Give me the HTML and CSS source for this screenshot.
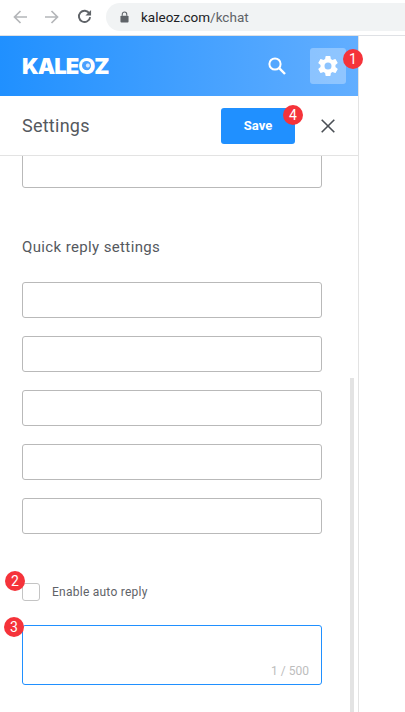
FILE: index.html
```html
<!DOCTYPE html>
<html lang="en">
<head>
    <meta charset="UTF-8">
    <meta name="viewport" content="width=device-width, initial-scale=1.0">
    <title>Kaleoz kchat settings</title>
    <link rel="stylesheet" href="styles.css">
</head>
<body>
    <div class="browser-bar">
        <svg class="nav-icon" width="14" height="14" viewBox="0 0 14 14"><path d="M14 7H1.5M7.5 1L1.5 7l6 6" fill="none" stroke="#b4b6b9" stroke-width="1.7"/></svg>
        <svg class="nav-icon" width="14" height="14" viewBox="0 0 14 14"><path d="M0 7h12.5M6.5 1l6 6-6 6" fill="none" stroke="#b4b6b9" stroke-width="1.7"/></svg>
        <svg class="nav-icon" width="15" height="15" viewBox="0 0 16 16"><path d="M13.2 4.8A6 6 0 1 0 14 8.6" fill="none" stroke="#5f6368" stroke-width="2"/><path d="M15 1v6H9z" fill="#5f6368"/></svg>
        <div class="url-box">
            <svg width="9" height="12" viewBox="0 0 10 13"><path d="M2.5 5V3.5a2.5 2.5 0 0 1 5 0V5" fill="none" stroke="#5f6368" stroke-width="1.2"/><rect x="0.5" y="5" width="9" height="7.5" rx="1" fill="#5f6368"/></svg>
            <span class="url-text">kaleoz.com<span class="url-path">/kchat</span></span>
        </div>
    </div>

    <div class="panel">
        <header class="top-bar">
            <div class="logo">KALE<span class="logo-o">O</span>Z</div>
            <div class="top-actions">
                <svg width="20" height="20" viewBox="0 0 20 20"><circle cx="8" cy="8" r="5.6" fill="none" stroke="#fff" stroke-width="2"/><path d="M12.2 12.2L18 18" stroke="#fff" stroke-width="2.4"/></svg>
                <div class="gear-box">
                    <svg width="24" height="24" viewBox="0 0 24 24"><path fill="#fff" d="M19.4 13c.04-.32.1-.66.1-1s-.06-.68-.1-1l2.1-1.65c.2-.15.25-.42.13-.64l-2-3.46c-.12-.22-.4-.3-.6-.22l-2.5 1c-.52-.4-1.08-.73-1.7-.98l-.37-2.65A.5.5 0 0 0 14 2h-4a.5.5 0 0 0-.5.42l-.37 2.65c-.62.25-1.18.6-1.7.98l-2.5-1c-.23-.09-.48 0-.6.22l-2 3.46c-.13.22-.07.49.12.64L4.57 11c-.04.32-.07.66-.07 1s.03.68.07 1l-2.11 1.65c-.19.15-.25.42-.12.64l2 3.46c.12.22.37.3.6.22l2.5-1c.52.4 1.08.73 1.7.98l.37 2.65c.04.24.25.42.5.42h4c.25 0 .46-.18.5-.42l.37-2.65c.62-.25 1.18-.58 1.7-.98l2.5 1c.23.09.48 0 .6-.22l2-3.46c.12-.22.07-.49-.13-.64L19.4 13zM12 15.5a3.5 3.5 0 1 1 0-7 3.5 3.5 0 0 1 0 7z"/></svg>
                    <span class="badge badge-gear">1</span>
                </div>
            </div>
        </header>

        <div class="sub-bar">
            <h1 class="sub-title">Settings</h1>
            <div class="sub-actions">
                <button class="save-btn">Save<span class="badge badge-save">4</span></button>
                <svg width="14" height="14" viewBox="0 0 14 14"><path d="M0.7 0.7l12.6 12.6M13.3 0.7L0.7 13.3" stroke="#4a4f55" stroke-width="1.6"/></svg>
            </div>
        </div>

        <div class="scroll-area">
            <div class="scroll-thumb"></div>
            <div class="text-input input-cut"></div>
            <h2 class="section-title">Quick reply settings</h2>
            <div class="input-list">
                <div class="text-input"></div>
                <div class="text-input"></div>
                <div class="text-input"></div>
                <div class="text-input"></div>
                <div class="text-input"></div>
            </div>
            <label class="check-row">
                <span class="check-box"><span class="badge badge-check">2</span></span>
                <span class="check-label">Enable auto reply</span>
            </label>
            <div class="reply-box">
                <span class="badge badge-reply">3</span>
                <span class="counter">1 / 500</span>
            </div>
        </div>
    </div>
</body>
</html>
```

FILE: styles.css
```css
* {
    box-sizing: border-box;
}

body {
    margin: 0;
    width: 405px;
    height: 712px;
    overflow: hidden;
    background: #fff;
    font-family: 'Roboto', 'Liberation Sans', sans-serif;
}

.browser-bar {
    height: 36px;
    display: flex;
    align-items: center;
    padding: 0 0 2px 13px;
    border-bottom: 1px solid #dfe1e5;
}

.nav-icon {
    margin-right: 18px;
    flex: none;
}

.nav-icon:nth-child(3) {
    margin-right: 14px;
}

.url-box {
    flex: 1;
    height: 28px;
    display: flex;
    align-items: center;
    gap: 12px;
    padding-left: 14px;
    background: #f1f3f4;
    border-radius: 14px 0 0 14px;
}

.url-text {
    font-size: 13.5px;
    color: #202124;
}

.url-path {
    color: #5f6368;
}

.panel {
    width: 359px;
    height: 676px;
    border-right: 1px solid #e3e3e3;
}

.top-bar {
    height: 60px;
    display: flex;
    align-items: center;
    justify-content: space-between;
    padding: 0 12px 0 22px;
    background: linear-gradient(90deg, #2090ff, #62aeff);
}

.logo {
    font-family: 'Inter', sans-serif;
    font-weight: 900;
    font-size: 22px;
    line-height: 22px;
    letter-spacing: -1px;
    color: #fff;
}

.logo-o {
    position: relative;
    display: inline-block;
}

.logo-o::after {
    content: "";
    position: absolute;
    left: 4px;
    top: 6px;
    width: 9px;
    height: 9px;
    border-radius: 50%;
    background: radial-gradient(circle at 65% 50%, #d6e9ff 0 1.5px, #4aa0ff 2.5px);
}

.top-actions {
    display: flex;
    align-items: center;
    gap: 23px;
}

.gear-box {
    position: relative;
    width: 36px;
    height: 36px;
    display: flex;
    align-items: center;
    justify-content: center;
    border-radius: 3px;
    background: rgba(255, 255, 255, 0.3);
}

.badge {
    position: absolute;
    width: 20px;
    height: 20px;
    display: flex;
    align-items: center;
    justify-content: center;
    border-radius: 50%;
    background: #f5333a;
    color: #fff;
    font-size: 14px;
    font-weight: 400;
}

.badge-gear {
    top: 1px;
    right: -17px;
}

.sub-bar {
    height: 60px;
    display: flex;
    align-items: center;
    justify-content: space-between;
    padding: 0 23px 0 22px;
    border-bottom: 1px solid #e3e3e3;
}

.sub-title {
    margin: 0;
    font-size: 18px;
    font-weight: 400;
    letter-spacing: 0.25px;
    color: #55595e;
}

.sub-actions {
    display: flex;
    align-items: center;
    gap: 26px;
}

.save-btn {
    position: relative;
    width: 74px;
    height: 36px;
    padding: 0;
    border: none;
    border-radius: 3px;
    background: #2090ff;
    color: #fff;
    font-family: inherit;
    font-size: 13px;
    font-weight: 700;
}

.badge-save {
    top: -3px;
    right: -8px;
}

.scroll-area {
    position: relative;
    height: 556px;
    overflow: hidden;
    padding: 0 36px 0 22px;
}

.scroll-thumb {
    position: absolute;
    top: 222px;
    right: 4px;
    bottom: 0;
    width: 4px;
    background: #e3e3e3;
}

.text-input {
    width: 300px;
    height: 36px;
    border: 1px solid #b9b9b9;
    border-radius: 3px;
}

.input-cut {
    margin-top: -4px;
}

.section-title {
    margin: 49px 0 25px;
    font-size: 15px;
    line-height: 20px;
    font-weight: 400;
    letter-spacing: 0.37px;
    color: #55595e;
}

.input-list {
    display: flex;
    flex-direction: column;
    gap: 18px;
}

.check-row {
    margin-top: 49px;
    display: flex;
    align-items: center;
    gap: 12px;
}

.check-box {
    position: relative;
    width: 18px;
    height: 18px;
    border: 1px solid #c4c4c4;
    border-radius: 3px;
}

.badge-check {
    top: -13px;
    left: -18px;
}

.check-label {
    font-size: 12px;
    letter-spacing: 0.25px;
    color: #5f6368;
}

.reply-box {
    position: relative;
    width: 300px;
    height: 60px;
    margin-top: 24px;
    border: 1px solid #2090ff;
    border-radius: 3px;
}

.badge-reply {
    top: -9px;
    left: -19px;
}

.counter {
    position: absolute;
    right: 12px;
    bottom: 6px;
    font-size: 12px;
    color: #bdbdbd;
}
```
